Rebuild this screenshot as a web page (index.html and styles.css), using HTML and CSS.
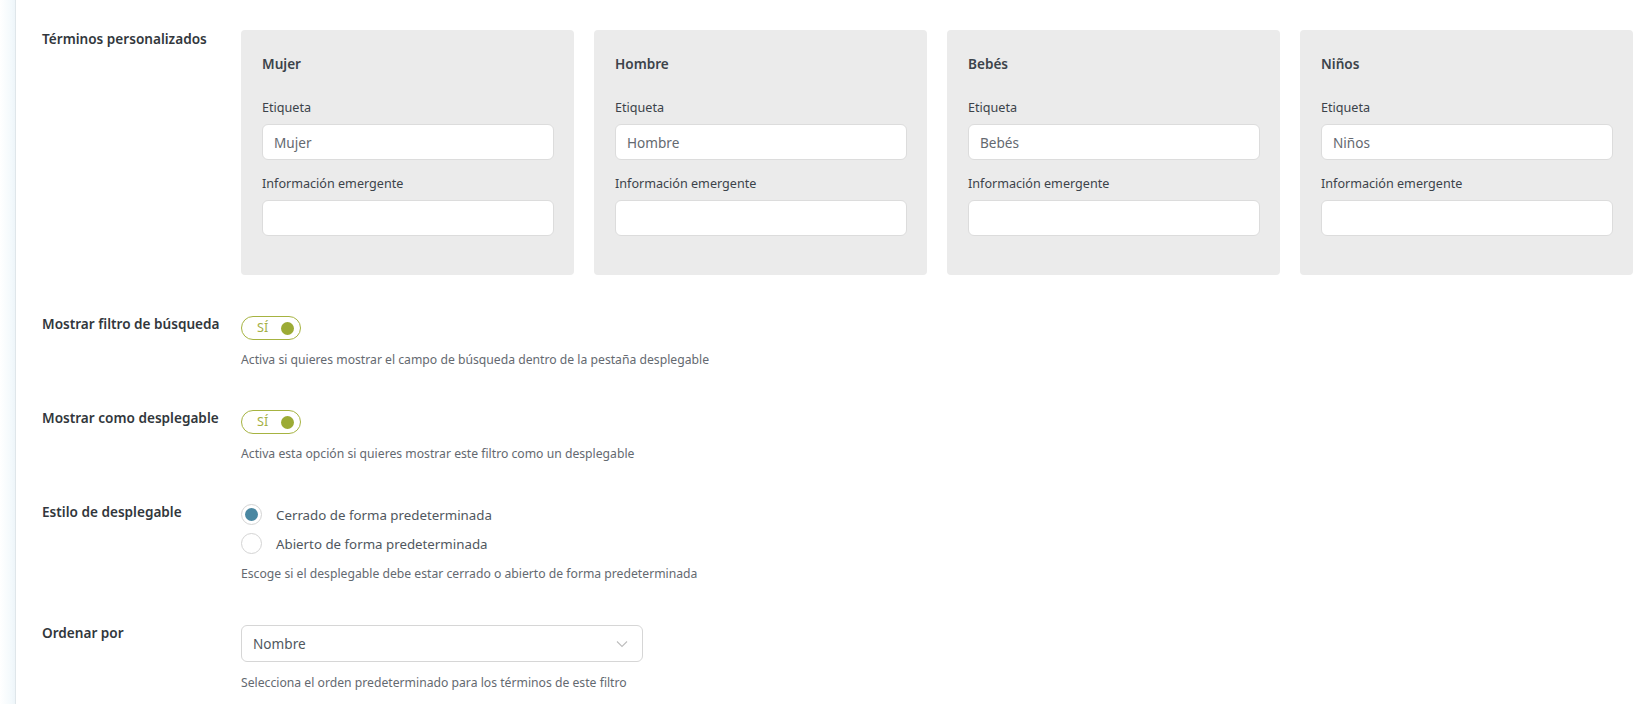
FILE: index.html
```html
<!DOCTYPE html>
<html lang="es">
<head>
<meta charset="utf-8">
<link rel="stylesheet" href="styles.css">
</head>
<body>
<div class="page">
  <div class="sidebar-edge"></div>
  <div class="content">
    <div class="row row-terms">
      <div class="label">Términos personalizados</div>
      <div class="field field-cards">
        <div class="cards">
          <div class="card">
            <div class="card-title">Mujer</div>
            <div class="sub-label">Etiqueta</div>
            <div class="input"><span class="input-text">Mujer</span></div>
            <div class="sub-label">Información emergente</div>
            <div class="input"></div>
          </div>
          <div class="card">
            <div class="card-title">Hombre</div>
            <div class="sub-label">Etiqueta</div>
            <div class="input"><span class="input-text">Hombre</span></div>
            <div class="sub-label">Información emergente</div>
            <div class="input"></div>
          </div>
          <div class="card">
            <div class="card-title">Bebés</div>
            <div class="sub-label">Etiqueta</div>
            <div class="input"><span class="input-text">Bebés</span></div>
            <div class="sub-label">Información emergente</div>
            <div class="input"></div>
          </div>
          <div class="card">
            <div class="card-title">Niños</div>
            <div class="sub-label">Etiqueta</div>
            <div class="input"><span class="input-text">Niños</span></div>
            <div class="sub-label">Información emergente</div>
            <div class="input"></div>
          </div>
        </div>
      </div>
    </div>

    <div class="row">
      <div class="label">Mostrar filtro de búsqueda</div>
      <div class="field">
        <div class="toggle"><span class="toggle-text">SÍ</span><span class="knob"></span></div>
        <div class="desc">Activa si quieres mostrar el campo de búsqueda dentro de la pestaña desplegable</div>
      </div>
    </div>

    <div class="row">
      <div class="label">Mostrar como desplegable</div>
      <div class="field">
        <div class="toggle"><span class="toggle-text">SÍ</span><span class="knob"></span></div>
        <div class="desc">Activa esta opción si quieres mostrar este filtro como un desplegable</div>
      </div>
    </div>

    <div class="row">
      <div class="label">Estilo de desplegable</div>
      <div class="field">
        <div class="radio-list">
          <div class="radio-item"><span class="radio checked"></span><span class="radio-text">Cerrado de forma predeterminada</span></div>
          <div class="radio-item"><span class="radio"></span><span class="radio-text">Abierto de forma predeterminada</span></div>
        </div>
        <div class="desc">Escoge si el desplegable debe estar cerrado o abierto de forma predeterminada</div>
      </div>
    </div>

    <div class="row row-last">
      <div class="label">Ordenar por</div>
      <div class="field">
        <div class="select">
          <span class="select-text">Nombre</span>
          <svg class="chevron" width="12" height="8" viewBox="0 0 12 8"><path d="M1 1.5 L6 6.5 L11 1.5" fill="none" stroke="#bdbdbd" stroke-width="1.1"/></svg>
        </div>
        <div class="desc desc-select">Selecciona el orden predeterminado para los términos de este filtro</div>
      </div>
    </div>
  </div>
</div>
</body>
</html>
```

FILE: styles.css
```css
* { box-sizing: border-box; }
html, body { margin: 0; padding: 0; background: #fff; }
body {
  font-family: "Noto Sans", "Open Sans", sans-serif;
  color: #3c434a;
  width: 1649px;
  height: 704px;
  overflow: hidden;
}
.page {
  display: flex;
  height: 704px;
}
.sidebar-edge {
  width: 16px;
  flex: none;
  background: linear-gradient(to right, #ffffff 0%, #f3f9fc 75%, #eef5f9 100%);
  border-right: 1px solid #dfe6ea;
}
.content {
  flex: 1;
  padding-left: 26px;
  padding-top: 29px;
}
.row {
  display: flex;
  margin-top: 39px;
}
.row-terms { margin-top: 0; }
.row-last { margin-top: 40px; }
.label {
  width: 199px;
  flex: none;
  font-size: 13.6px;
  font-weight: 600;
  color: #32373c;
  line-height: 20px;
}
.field { flex: 1; padding-top: 2px; }
.field-cards { padding-top: 1px; }

.cards {
  display: flex;
  gap: 20px;
}
.card {
  width: 333px;
  height: 245px;
  background: #ebebeb;
  border-radius: 4px;
  padding: 24px 20px 0 21px;
}
.card-title {
  font-size: 13.6px;
  font-weight: 600;
  color: #3c434a;
  line-height: 20px;
  margin-bottom: 25px;
}
.sub-label {
  font-size: 12.6px;
  color: #3c434a;
  line-height: 18px;
  margin-bottom: 7px;
}
.input {
  height: 36px;
  background: #fff;
  border: 1px solid #dcdcdc;
  border-radius: 6px;
  padding: 0 10px 0 11px;
  display: flex;
  align-items: center;
  margin-bottom: 15px;
}
.input-text {
  font-size: 13.6px;
  color: #646970;
}

.toggle {
  width: 60px;
  height: 24px;
  border: 1.4px solid #a6b341;
  border-radius: 12px;
  display: flex;
  align-items: center;
  padding: 0 0 0 15px;
}
.toggle-text {
  font-size: 12.6px;
  color: #a3af45;
  line-height: 1;
  width: 24px;
}
.knob {
  width: 13px;
  height: 13px;
  border-radius: 50%;
  background: #9cab35;
}
.desc {
  font-size: 12.2px;
  color: #646970;
  line-height: 18px;
  margin-top: 11px;
}

.radio-list {
  display: flex;
  flex-direction: column;
  gap: 8px;
}
.radio-item {
  display: flex;
  align-items: center;
  gap: 14px;
  height: 21px;
}
.radio {
  width: 21px;
  height: 21px;
  border-radius: 50%;
  border: 1px solid #d4d4d4;
  background: #fff;
  flex: none;
  display: flex;
  align-items: center;
  justify-content: center;
}
.radio.checked::after {
  content: "";
  width: 13px;
  height: 13px;
  border-radius: 50%;
  background: #4a87a1;
}
.radio-text {
  font-size: 13.3px;
  color: #50575e;
}

.select {
  width: 402px;
  height: 37px;
  border: 1px solid #d6d6d6;
  border-radius: 6px;
  display: flex;
  align-items: center;
  justify-content: space-between;
  padding: 0 14px 0 11px;
}
.select-text {
  font-size: 13.6px;
  color: #50575e;
}
.desc-select { margin-top: 12px; }
```
